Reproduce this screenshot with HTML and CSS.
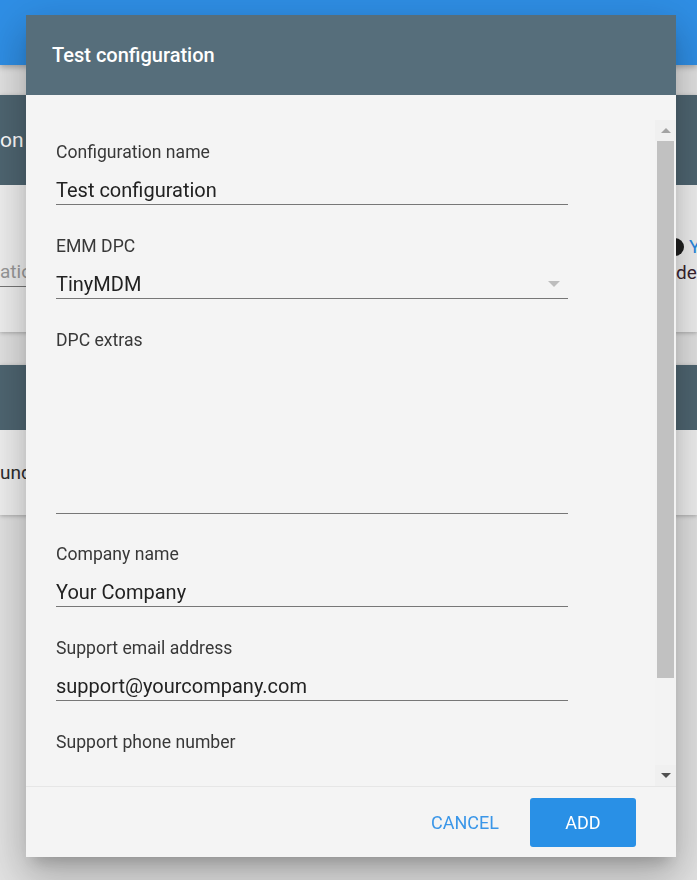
FILE: index.html
```html
<!DOCTYPE html>
<html lang="en">
<head>
<meta charset="utf-8">
<title>Test configuration</title>
<link rel="stylesheet" href="styles.css">
</head>
<body>
<div class="topbar"></div>
<main class="page">
  <section class="card">
    <div class="card-head"><span class="card-title">on</span></div>
    <div class="card-body">
      <div class="left-field"><span class="ph">ation name</span></div>
      <div class="right-col">
        <div class="r1"><span class="dot"></span><span class="link">Y</span></div>
        <div class="r2">ded</div>
      </div>
    </div>
  </section>
  <section class="card card2">
    <div class="card-head"></div>
    <div class="card-body">
      <div class="left-text">und</div>
    </div>
  </section>
</main>

<div class="dialog">
  <div class="dlg-head">Test configuration</div>
  <div class="dlg-body">
    <div class="content">
      <div class="field">
        <div class="label">Configuration name</div>
        <div class="input">Test configuration</div>
      </div>
      <div class="field">
        <div class="label">EMM DPC</div>
        <div class="input"><span>TinyMDM</span><span class="caret"></span></div>
      </div>
      <div class="field field-area">
        <div class="label">DPC extras</div>
        <div class="textarea"></div>
      </div>
      <div class="field">
        <div class="label">Company name</div>
        <div class="input">Your Company</div>
      </div>
      <div class="field">
        <div class="label">Support email address</div>
        <div class="input">support@yourcompany.com</div>
      </div>
      <div class="field">
        <div class="label">Support phone number</div>
        <div class="input"></div>
      </div>
    </div>
    <div class="sbar">
      <div class="sbtn"><span class="arr-up"></span></div>
      <div class="thumb"></div>
      <div class="track"></div>
      <div class="sbtn"><span class="arr-down"></span></div>
    </div>
  </div>
  <div class="dlg-foot">
    <button class="btn btn-text">CANCEL</button>
    <button class="btn btn-primary">ADD</button>
  </div>
</div>
</body>
</html>
```

FILE: styles.css
```css
* { box-sizing: border-box; }

html, body {
  margin: 0;
  height: 100%;
}

body {
  background: #e3e3e3;
  font-family: Roboto, "Liberation Sans", Arial, sans-serif;
  overflow: hidden;
  width: 697px;
}

.topbar {
  height: 65px;
  background: #2f8fe6;
  box-shadow: 0 2px 6px rgba(0, 0, 0, 0.28);
  position: relative;
  z-index: 1;
}

.page {
  padding-top: 30px;
}

.card {
  margin-bottom: 33px;
  box-shadow: 0 1px 4px rgba(0, 0, 0, 0.25);
}

.card-head {
  height: 90px;
  background: #4f6672;
  display: flex;
  align-items: center;
  color: #fff;
  font-size: 21px;
}

.card-body {
  height: 147px;
  background: #f1f1f1;
  display: flex;
  justify-content: space-between;
  overflow: hidden;
}

.left-field {
  width: 300px;
  margin-top: 75px;
  align-self: flex-start;
  padding-bottom: 2px;
  border-bottom: 1px solid #777;
  font-size: 19px;
  line-height: 24px;
  white-space: nowrap;
}

.ph { color: #9a9a9a; }

.right-col {
  width: 31px;
  flex: none;
  overflow: hidden;
  white-space: nowrap;
  padding-top: 49px;
  font-size: 19px;
  line-height: 26px;
}

.r1 {
  display: flex;
  align-items: center;
  gap: 5px;
}

.dot {
  width: 18px;
  height: 18px;
  border-radius: 50%;
  background: #1f1f1f;
  flex: none;
}

.link { color: #2a8ae0; }

.r2 {
  padding-left: 10px;
  color: #3a2430;
}

.card2 .card-head { height: 65px; }

.card2 .card-body { height: 85px; }

.left-text {
  padding-top: 31px;
  font-size: 19px;
  line-height: 24px;
  color: #2e2e2e;
}

/* Dialog */
.dialog {
  position: fixed;
  left: 26px;
  top: 15px;
  width: 650px;
  height: 842px;
  background: #f4f4f4;
  display: flex;
  flex-direction: column;
  z-index: 5;
  box-shadow: 0 11px 15px -7px rgba(0, 0, 0, 0.2),
              0 24px 38px 3px rgba(0, 0, 0, 0.14),
              0 9px 46px 8px rgba(0, 0, 0, 0.12);
}

.dlg-head {
  height: 80px;
  flex: none;
  background: #566e7b;
  padding-left: 26px;
  display: flex;
  align-items: center;
  color: #fff;
  font-size: 20px;
  font-weight: 500;
}

.dlg-body {
  flex: 1;
  min-height: 0;
  padding-top: 25px;
  display: flex;
}

.content {
  flex: 1;
  overflow: hidden;
  padding: 22px 0 0 30px;
}

.field { margin-bottom: 31px; }

.field-area { margin-bottom: 30px; }

.label {
  font-size: 17.6px;
  line-height: 20px;
  color: #383838;
}

.input {
  width: 512px;
  padding: 16px 0 2px;
  border-bottom: 1px solid #777;
  font-size: 20px;
  line-height: 24px;
  min-height: 43px;
  color: #222;
  display: flex;
  align-items: center;
  justify-content: space-between;
}

.caret {
  width: 0;
  height: 0;
  border-left: 6px solid transparent;
  border-right: 6px solid transparent;
  border-top: 6px solid #bdbdbd;
  margin-right: 8px;
}

.textarea {
  width: 512px;
  height: 164px;
  border-bottom: 1px solid #777;
}

.sbar {
  width: 21px;
  flex: none;
  display: flex;
  flex-direction: column;
  background: #f3f3f3;
}

.sbtn {
  height: 21px;
  flex: none;
  background: #f0f0f0;
  display: flex;
  align-items: center;
  justify-content: center;
}

.arr-up {
  width: 0;
  height: 0;
  border-left: 5px solid transparent;
  border-right: 5px solid transparent;
  border-bottom: 5px solid #a3a3a3;
}

.arr-down {
  width: 0;
  height: 0;
  border-left: 5px solid transparent;
  border-right: 5px solid transparent;
  border-top: 5px solid #505050;
}

.thumb {
  height: 537px;
  flex: none;
  margin: 0 2px;
  background: #c1c1c1;
}

.track { flex: 1; }

.dlg-foot {
  height: 71px;
  flex: none;
  border-top: 1px solid #e6e6e6;
  display: flex;
  justify-content: flex-end;
  align-items: center;
  gap: 15px;
  padding-right: 40px;
}

.btn {
  font-family: Roboto, "Liberation Sans", Arial, sans-serif;
  font-size: 18px;
  height: 49px;
  border: none;
  border-radius: 3px;
  cursor: pointer;
}

.btn-text {
  background: transparent;
  color: #3a96e8;
  padding: 0 16px;
}

.btn-primary {
  width: 106px;
  background: #2990e6;
  color: #fff;
}
```
